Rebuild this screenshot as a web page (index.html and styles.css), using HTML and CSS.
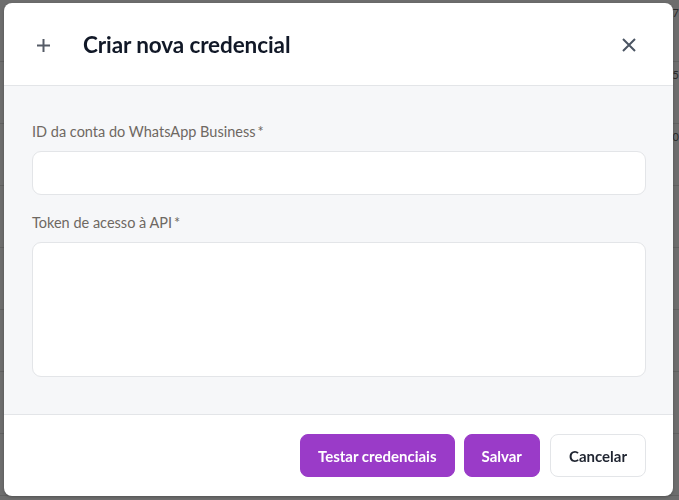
FILE: index.html
```html
<!DOCTYPE html>
<html lang="pt">
<head>
<meta charset="utf-8">
<title>Criar nova credencial</title>
<link rel="stylesheet" href="styles.css">
</head>
<body>
<div class="backdrop">
  <div class="bg-row"><span class="bg-cell">7</span></div>
  <div class="bg-row"><span class="bg-cell">5</span></div>
  <div class="bg-row"><span class="bg-cell">0</span></div>
  <div class="bg-row"></div>
  <div class="bg-row"></div>
  <div class="bg-row"></div>
  <div class="bg-row"></div>
  <div class="bg-row"></div>
</div>
<div class="modal" role="dialog" aria-labelledby="modal-title">
  <header class="modal-header">
    <svg class="icon-plus" width="15" height="15" viewBox="0 0 15 15" aria-hidden="true">
      <path d="M7.5 1v13M1 7.5h13" stroke="#555b66" stroke-width="2" fill="none" stroke-linecap="butt"/>
    </svg>
    <h1 id="modal-title" class="modal-title">Criar nova credencial</h1>
    <button class="close-btn" aria-label="Fechar">
      <svg width="14" height="14" viewBox="0 0 14 14" aria-hidden="true">
        <path d="M1 1l12 12M13 1L1 13" stroke="#4b5563" stroke-width="2" fill="none"/>
      </svg>
    </button>
  </header>
  <div class="modal-body">
    <div class="field">
      <label class="field-label" for="waba">ID da conta do WhatsApp Business<span class="req">*</span></label>
      <input id="waba" class="input" type="text">
    </div>
    <div class="field">
      <label class="field-label" for="token">Token de acesso à API<span class="req">*</span></label>
      <textarea id="token" class="textarea"></textarea>
    </div>
  </div>
  <footer class="modal-footer">
    <button class="btn btn-primary">Testar credenciais</button>
    <button class="btn btn-primary">Salvar</button>
    <button class="btn btn-secondary">Cancelar</button>
  </footer>
</div>
</body>
</html>
```

FILE: styles.css
```css
* { box-sizing: border-box; }

html, body {
  margin: 0;
  height: 100%;
}

body {
  font-family: Lato, "Noto Sans", "Liberation Sans", sans-serif;
  background: #6d6d6d;
  overflow: hidden;
}

.backdrop {
  display: flex;
  flex-direction: column;
}

.bg-row {
  height: 62px;
  border-bottom: 1px solid #606060;
  display: flex;
  justify-content: flex-end;
  align-items: flex-start;
  padding-top: 6px;
}

.bg-cell {
  color: #2a2a2a;
  font-size: 11px;
  margin-right: 0;
}

.modal {
  position: fixed;
  left: 4px;
  top: 3px;
  width: 669px;
  height: 493px;
  background: #ffffff;
  border-radius: 8px;
  overflow: hidden;
  display: flex;
  flex-direction: column;
  box-shadow: 0 1px 3px rgba(0,0,0,0.25);
}

.modal-header {
  height: 83px;
  flex: none;
  display: flex;
  align-items: center;
  padding: 0 37px 0 32px;
  border-bottom: 1px solid #e3e5e8;
}

.icon-plus {
  flex: none;
  margin-top: 2px;
}

.modal-title {
  margin: 0 0 0 32px;
  font-size: 22.5px;
  font-weight: 700;
  color: #111827;
  letter-spacing: -0.1px;
}

.close-btn {
  margin-left: auto;
  border: 0;
  background: none;
  padding: 0;
  width: 14px;
  height: 14px;
  display: flex;
  margin-top: 2px;
}

.modal-body {
  flex: 1;
  background: #f6f7f9;
  padding: 36px 27px 0 28px;
  display: flex;
  flex-direction: column;
  gap: 18px;
  border-bottom: 1px solid #e3e5e8;
}

.field {
  display: flex;
  flex-direction: column;
  gap: 9px;
}

.field-label {
  font-size: 14.5px;
  line-height: 20px;
  color: #6e6862;
}

.req {
  margin-left: 2px;
}

.input {
  height: 44px;
  border: 1px solid #e3e5e8;
  border-radius: 9px;
  background: #ffffff;
  font: inherit;
  outline: none;
}

.textarea {
  height: 135px;
  border: 1px solid #e3e5e8;
  border-radius: 9px;
  background: #ffffff;
  font: inherit;
  resize: none;
  outline: none;
}

.modal-footer {
  height: 81px;
  flex: none;
  display: flex;
  justify-content: flex-end;
  align-items: flex-start;
  padding: 19px 27px 0 0;
  gap: 9px;
}

.btn {
  height: 43px;
  border-radius: 8px;
  font-family: inherit;
  font-size: 15px;
  font-weight: 700;
  padding: 0 17px;
  cursor: pointer;
}

.btn-primary {
  background: #9a3bc8;
  border: 1px solid #9a3bc8;
  color: #ffffff;
}

.btn-secondary {
  background: #ffffff;
  border: 1px solid #e3e5e8;
  color: #1f2430;
  margin-left: 1px;
  padding: 0 18px;
}
```
